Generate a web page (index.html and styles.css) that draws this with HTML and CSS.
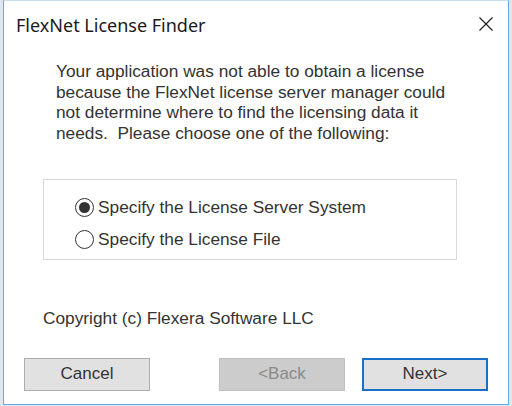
FILE: index.html
```html
<!DOCTYPE html>
<html>
<head>
<meta charset="utf-8">
<link rel="stylesheet" href="styles.css">
</head>
<body>
<div class="window">
  <div class="titlebar">
    <span class="title">FlexNet License Finder</span>
    <svg class="close" width="16" height="16" viewBox="0 0 16 16"><path d="M1.5 1.5 L14.5 14.5 M14.5 1.5 L1.5 14.5" stroke="#1a1a1a" stroke-width="1.1" fill="none"/></svg>
  </div>
  <div class="content">
    <p class="message">Your application was not able to obtain a license<br>because the FlexNet license server manager could<br>not determine where to find the licensing data it<br>needs.&nbsp; Please choose one of the following:</p>
    <div class="group">
      <div class="option"><span class="radio checked"></span><span>Specify the License Server System</span></div>
      <div class="option"><span class="radio"></span><span>Specify the License File</span></div>
    </div>
    <p class="copyright">Copyright (c) Flexera Software LLC</p>
    <div class="buttons">
      <button class="btn">Cancel</button>
      <div class="nav">
        <button class="btn disabled">&lt;Back</button>
        <button class="btn default">Next&gt;</button>
      </div>
    </div>
  </div>
</div>
</body>
</html>
```
FILE: styles.css
```css
html, body {
  margin: 0;
  padding: 0;
  background: #dfe6ee;
  width: 512px;
  height: 406px;
  overflow: hidden;
}
.window {
  box-sizing: border-box;
  margin-left: 3px;
  width: 506px;
  height: 405px;
  background: #ffffff;
  border: 1px solid #6aa6e0;
  border-top-color: #c4dcf3;
  display: flex;
  flex-direction: column;
}
.titlebar {
  height: 44px;
  display: flex;
  align-items: center;
  justify-content: space-between;
  padding: 0 14px 0 12px;
  flex-shrink: 0;
}
.title {
  font-family: "Noto Sans", "Open Sans", sans-serif;
  font-size: 18px;
  color: #1a1a1a;
  margin-top: 4px;
}
.close {
  margin-top: 2px;
}
.content {
  padding: 16px 0 0 0;
  display: flex;
  flex-direction: column;
  font-family: "Liberation Sans", Arial, sans-serif;
  font-size: 17.3px;
  color: #333333;
}
.message {
  margin: 0 0 0 52px;
  line-height: 20.7px;
  white-space: nowrap;
}
.group {
  margin: 35px 0 0 39px;
  width: 414px;
  height: 81px;
  box-sizing: border-box;
  border: 1px solid #dadada;
  padding: 18px 0 0 31px;
  display: flex;
  flex-direction: column;
  gap: 12px;
}
.option {
  display: flex;
  align-items: center;
  gap: 4px;
  height: 20px;
  white-space: nowrap;
}
.radio {
  box-sizing: border-box;
  width: 19px;
  height: 19px;
  border: 1.3px solid #333;
  border-radius: 50%;
  display: flex;
  align-items: center;
  justify-content: center;
  background: #fff;
  flex-shrink: 0;
}
.radio.checked::after {
  content: "";
  width: 11px;
  height: 11px;
  border-radius: 50%;
  background: #333;
}
.copyright {
  margin: 48px 0 0 39px;
  line-height: 20px;
  white-space: nowrap;
}
.buttons {
  margin: 30px 0 0 20px;
  width: 464px;
  display: flex;
  justify-content: space-between;
}
.nav {
  display: flex;
  gap: 17px;
}
.btn {
  box-sizing: border-box;
  width: 126px;
  height: 33px;
  font-family: "Liberation Sans", Arial, sans-serif;
  font-size: 17px;
  color: #333333;
  background: #e1e1e1;
  border: 1px solid #adadad;
  padding: 0;
  margin: 0;
}
.btn.disabled {
  background: #cccccc;
  border-color: #bfbfbf;
  color: #8a8a8a;
}
.btn.default {
  border: 2px solid #1a6fc9;
}
```
